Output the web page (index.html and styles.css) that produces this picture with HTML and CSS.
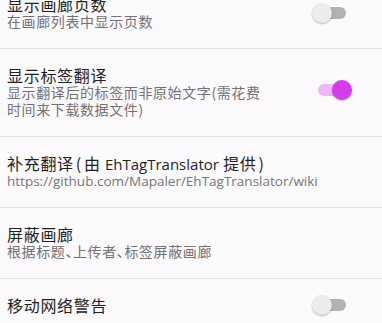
FILE: index.html
```html
<!DOCTYPE html>
<html lang="zh-CN">
<head>
<meta charset="utf-8">
<link rel="stylesheet" href="styles.css">
</head>
<body>
<div class="list">
  <div class="pref">
    <div class="text">
      <div class="title">显示画廊页数</div>
      <div class="summary">在画廊列表中显示页数</div>
    </div>
    <div class="switch"><span class="track"></span><span class="thumb"></span></div>
  </div>
  <div class="pref">
    <div class="text">
      <div class="title">显示标签翻译</div>
      <div class="summary">显示翻译后的标签而非原始文字(需花费<br>时间来下载数据文件)</div>
    </div>
    <div class="switch on up"><span class="track"></span><span class="thumb"></span></div>
  </div>
  <div class="pref">
    <div class="text">
      <div class="title">补充翻译<span class="paren">(</span>由 <span class="latin">EhTagTranslator</span> 提供<span class="paren">)</span></div>
      <div class="summary url">https://github.com/Mapaler/EhTagTranslator/wiki</div>
    </div>
  </div>
  <div class="pref">
    <div class="text">
      <div class="title">屏蔽画廊</div>
      <div class="summary">根据标题、上传者、标签屏蔽画廊</div>
    </div>
  </div>
  <div class="pref single">
    <div class="text">
      <div class="title">移动网络警告</div>
    </div>
    <div class="switch"><span class="track"></span><span class="thumb"></span></div>
  </div>
</div>
</body>
</html>
```

FILE: styles.css
```css
html, body {
  margin: 0;
  padding: 0;
  background: #fcfafd;
  overflow: hidden;
}
body {
  width: 382px;
  height: 323px;
  font-family: "Noto Sans CJK SC", "Noto Sans", sans-serif;
}
.list {
  margin-top: -22px;
}
.pref {
  display: flex;
  align-items: center;
  padding: 17px 36px 17px 7px;
  border-bottom: 1px solid #e4e2e6;
}
.pref.single {
  border-bottom: none;
  padding-top: 16px;
}
.text {
  flex: 1;
  min-width: 0;
}
.title {
  font-size: 16px;
  line-height: 18px;
  letter-spacing: 0.7px;
  color: #1f1f1f;
  white-space: nowrap;
}
.paren {
  margin: 0 2px;
}
.latin {
  font-family: "Open Sans", sans-serif;
  letter-spacing: 0;
  font-size: 15px;
}
.summary {
  font-size: 14px;
  line-height: 17.5px;
  letter-spacing: 0.6px;
  color: #737173;
  white-space: nowrap;
  font-feature-settings: "halt";
}
.summary.url {
  font-family: "Open Sans", sans-serif;
  letter-spacing: 0;
  font-size: 13.5px;
  color: #777577;
}
.switch {
  position: relative;
  width: 28px;
  height: 20px;
  flex: none;
}
.switch.up {
  margin-top: -5px;
}
.track {
  position: absolute;
  left: 0;
  top: 4px;
  width: 28px;
  height: 12px;
  border-radius: 6px;
  background: #b2b1b3;
}
.thumb {
  position: absolute;
  left: -6px;
  top: 0;
  width: 20px;
  height: 20px;
  border-radius: 50%;
  background: #ececec;
  box-shadow: 0 1px 2px rgba(0,0,0,0.28);
}
.switch.on .track {
  background: #f0b6f6;
}
.switch.on .thumb {
  left: 14px;
  background: #d53de9;
}
```
